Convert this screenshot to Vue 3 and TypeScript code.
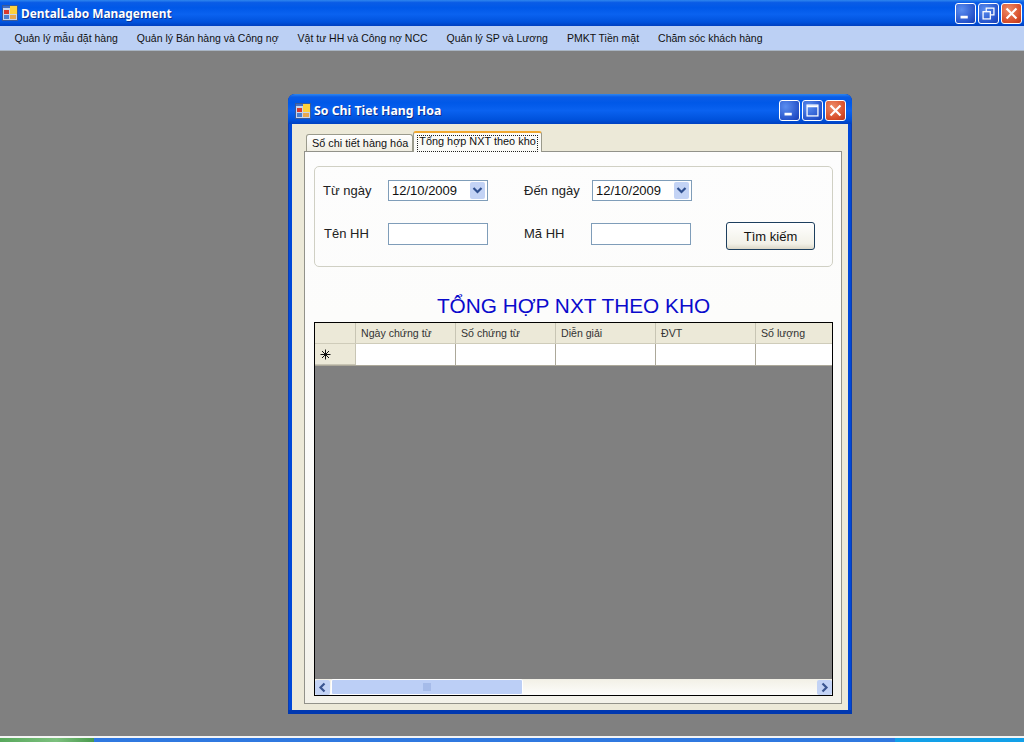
<script setup lang="ts">
const menus: string[] = [
  'Quản lý mẫu đặt hàng',
  'Quản lý Bán hàng và Công nợ',
  'Vật tư HH và Công nợ NCC',
  'Quản lý SP và Lương',
  'PMKT Tiền mặt',
  'Chăm sóc khách hàng',
]
const columns: string[] = ['Ngày chứng từ', 'Số chứng từ', 'Diễn giải', 'ĐVT', 'Số lượng']
</script>

<template>
  <div class="screen">
    <header class="titlebar main-title">
      <svg class="app-icon" viewBox="0 0 16 16" width="16" height="16">
        <rect x="0.5" y="0.5" width="15" height="15" fill="#c8d6ee" stroke="#3a5a98" />
        <rect x="1" y="1" width="7" height="2" fill="#3f6fc8" />
        <rect x="8" y="1" width="7" height="8" fill="#ffd23c" />
        <rect x="2" y="5" width="5" height="4" fill="#d83a2c" />
        <rect x="2" y="10" width="5" height="4" fill="#4a7fd0" />
        <rect x="8" y="10" width="6" height="4" fill="#e8a850" />
      </svg>
      <span class="main-name">DentalLabo Management</span>
      <div class="controls">
        <button class="ctl ctl-blue" aria-label="Minimize">
          <svg viewBox="0 0 21 21"><rect x="5" y="13" width="8" height="3" fill="#fff" /></svg>
        </button>
        <button class="ctl ctl-blue" aria-label="Restore">
          <svg viewBox="0 0 21 21" fill="none" stroke="#fff" stroke-width="1.4">
            <rect x="4.5" y="8.5" width="8" height="8" />
            <path d="M8 8V4.5h8.5V12H13" />
          </svg>
        </button>
        <button class="ctl ctl-red" aria-label="Close">
          <svg viewBox="0 0 21 21"><path d="M5 5l11 11M16 5L5 16" stroke="#fff" stroke-width="2.4" /></svg>
        </button>
      </div>
    </header>

    <nav class="menubar">
      <span v-for="m in menus" :key="m" class="menu-item">{{ m }}</span>
    </nav>

    <main class="desktop">
      <section class="dialog">
        <header class="titlebar dialog-title">
          <svg class="app-icon" viewBox="0 0 16 16" width="16" height="16">
            <rect x="0.5" y="0.5" width="15" height="15" fill="#c8d6ee" stroke="#3a5a98" />
            <rect x="1" y="1" width="7" height="2" fill="#3f6fc8" />
            <rect x="8" y="1" width="7" height="8" fill="#ffd23c" />
            <rect x="2" y="5" width="5" height="4" fill="#d83a2c" />
            <rect x="2" y="10" width="5" height="4" fill="#4a7fd0" />
            <rect x="8" y="10" width="6" height="4" fill="#e8a850" />
          </svg>
          <span class="dialog-name">So Chi Tiet Hang Hoa</span>
          <div class="controls">
            <button class="ctl ctl-blue" aria-label="Minimize">
              <svg viewBox="0 0 21 21"><rect x="5" y="13" width="8" height="3" fill="#fff" /></svg>
            </button>
            <button class="ctl ctl-blue" aria-label="Maximize">
              <svg viewBox="0 0 21 21" fill="none" stroke="#fff" stroke-width="1.4">
                <rect x="4.5" y="4.5" width="12" height="12" />
                <path d="M4.5 6h12" stroke-width="2" />
              </svg>
            </button>
            <button class="ctl ctl-red" aria-label="Close">
              <svg viewBox="0 0 21 21"><path d="M5 5l11 11M16 5L5 16" stroke="#fff" stroke-width="2.4" /></svg>
            </button>
          </div>
        </header>

        <div class="dialog-body">
          <div class="tabstrip">
            <div class="tab">Sổ chi tiết hàng hóa</div>
            <div class="tab tab-active"><span class="tab-focus">Tổng hợp NXT theo kho</span></div>
          </div>

          <div class="tabpage">
            <div class="group">
              <div class="form-row row-one">
                <label class="lbl lbl-a">Từ ngày</label>
                <div class="date-box">
                  <span>12/10/2009</span>
                  <span class="drop">
                    <svg viewBox="0 0 15 17" width="15" height="17"><path d="M3.5 6l4 4 4-4" fill="none" stroke="#2f4f8f" stroke-width="2.2" /></svg>
                  </span>
                </div>
                <label class="lbl lbl-b">Đến ngày</label>
                <div class="date-box">
                  <span>12/10/2009</span>
                  <span class="drop">
                    <svg viewBox="0 0 15 17" width="15" height="17"><path d="M3.5 6l4 4 4-4" fill="none" stroke="#2f4f8f" stroke-width="2.2" /></svg>
                  </span>
                </div>
              </div>
              <div class="form-row row-two">
                <label class="lbl lbl-a lbl-ten">Tên HH</label>
                <div class="text-box"></div>
                <label class="lbl lbl-c">Mã HH</label>
                <div class="text-box"></div>
                <button class="search">Tìm kiếm</button>
              </div>
            </div>

            <h1 class="report-title">TỔNG HỢP NXT THEO KHO</h1>

            <div class="grid">
              <div class="grid-row grid-head">
                <div class="row-head"></div>
                <div v-for="c in columns" :key="c" class="col-head">{{ c }}</div>
              </div>
              <div class="grid-row grid-new">
                <div class="row-head star">
                  <svg viewBox="0 0 11 11" width="11" height="11">
                    <path d="M5.5 0.5v10M0.5 5.5h10M2 2l7 7M9 2l-7 7" stroke="#111" stroke-width="1" fill="none" />
                  </svg>
                </div>
                <div v-for="c in columns" :key="c" class="cell"></div>
              </div>
              <div class="grid-empty"></div>
              <div class="hscroll">
                <span class="sbtn">
                  <svg viewBox="0 0 15 15" width="15" height="15"><path d="M9.5 3.5l-4 4 4 4" fill="none" stroke="#3a5590" stroke-width="2.2" /></svg>
                </span>
                <span class="thumb">
                  <svg viewBox="0 0 9 8" width="9" height="8"><path d="M1 0v8M3 0v8M5 0v8M7 0v8" stroke="#8fa8dc" /></svg>
                </span>
                <span class="track"></span>
                <span class="sbtn">
                  <svg viewBox="0 0 15 15" width="15" height="15"><path d="M5.5 3.5l4 4-4 4" fill="none" stroke="#3a5590" stroke-width="2.2" /></svg>
                </span>
              </div>
            </div>
          </div>
        </div>
      </section>
    </main>

    <footer class="taskbar">
      <span class="start"></span>
      <span class="task-mid"></span>
      <span class="tray"></span>
    </footer>
  </div>
</template>

<style>
html, body { margin: 0; padding: 0; }
</style>

<style scoped>
.screen {
  width: 1024px;
  height: 742px;
  display: flex;
  flex-direction: column;
  overflow: hidden;
  font-family: "Liberation Sans", sans-serif;
  color: #111;
}
.titlebar {
  display: flex;
  align-items: center;
  background: linear-gradient(180deg, #2f86ee 0, #0a5ce6 10%, #0058e8 30%, #0a62f0 55%, #0052dc 85%, #0040c0 100%);
  color: #fff;
  font-weight: 700;
  font-family: "Noto Sans", sans-serif;
}
.main-title {
  height: 26px;
  flex: none;
  padding: 0 2px 0 2px;
  box-sizing: border-box;
}
.main-name {
  margin-left: 3px;
  font-size: 11.9px;
  text-shadow: 1px 1px 0 #0a2f8f;
}
.controls {
  margin-left: auto;
  display: flex;
  gap: 2px;
}
.ctl {
  width: 21px;
  height: 21px;
  padding: 0;
  border: 1px solid #fff;
  border-radius: 3px;
  display: block;
}
.ctl svg { display: block; width: 100%; height: 100%; }
.ctl-blue { background: radial-gradient(circle at 30% 30%, #5b8ef0, #2350c8 75%, #1a3fae); }
.ctl-red { background: radial-gradient(circle at 35% 30%, #ee8c68, #d8502c 65%, #b8341a); }
.menubar {
  height: 24px;
  flex: none;
  background: #bcd0f4;
  display: flex;
  align-items: center;
  padding-left: 5px;
  font-size: 10.5px;
  border-bottom: 1px solid #a9b5c4;
}
.menu-item { padding: 0 9.5px; white-space: nowrap; }
.desktop {
  flex: 1;
  background: #808080;
  position: relative;
}
.dialog {
  position: absolute;
  left: 288px;
  top: 43px;
  width: 564px;
  height: 620px;
  box-sizing: border-box;
  display: flex;
  flex-direction: column;
  border-radius: 7px 7px 0 0;
  overflow: hidden;
  background: #0048d8;
  border-bottom: 4px solid #0038b0;
  box-shadow: inset 1px 0 0 #0a3cb0, inset -1px 0 0 #0a3cb0;
}
.dialog-title {
  height: 30px;
  flex: none;
  padding: 3px 6px 0 7px;
  box-sizing: border-box;
}
.dialog-name {
  margin-left: 3px;
  font-size: 12.3px;
  text-shadow: 1px 1px 0 #0a2f8f;
}
.dialog-body {
  flex: 1;
  margin: 0 4px;
  background: #ece9d8;
  padding: 7px 6px 6px 12px;
  display: flex;
  flex-direction: column;
  min-height: 0;
}
.tabstrip {
  display: flex;
  align-items: flex-end;
  height: 20px;
  padding-left: 2px;
  flex: none;
  font-size: 10.9px;
}
.tab {
  height: 16px;
  padding: 0 4px 0 5px;
  width: 96px;
  line-height: 17px;
  background: linear-gradient(180deg, #fff, #f0eee2);
  border: 1px solid #9a9a8c;
  border-bottom: none;
  border-radius: 3px 3px 0 0;
  white-space: nowrap;
}
.tab-active {
  height: 21px;
  width: 129px;
  box-sizing: border-box;
  padding: 2px 3px 0 3px;
  background: #fbfbf8;
  border-top: 2px solid #f0a830;
  margin-bottom: -1px;
  position: relative;
  z-index: 1;
}
.tab-focus {
  display: block;
  border: 1px dotted #222;
  height: 15px;
  line-height: 11px;
  text-align: center;
}
.tabpage {
  flex: 1;
  min-height: 0;
  background: linear-gradient(180deg, #fdfdfd 0, #fbfbf9 60%, #f3f2ea 100%);
  border: 1px solid #92928a;
  padding: 14px 8px 7px 9px;
  display: flex;
  flex-direction: column;
  box-sizing: border-box;
}
.group {
  height: 101px;
  flex: none;
  box-sizing: border-box;
  border: 1px solid #d0d0c4;
  border-radius: 5px;
  padding: 13px 0 0 8px;
  width: 519px;
}
.form-row {
  display: flex;
  align-items: center;
  font-size: 13px;
}
.row-one { height: 21px; }
.row-two { height: 28px; margin-top: 21px; align-items: flex-start; }
.lbl { display: block; white-space: nowrap; color: #222; }
.row-two .lbl { line-height: 22px; margin-top: 1px; }
.lbl-a { width: 65px; }
.lbl-b { width: 68px; margin-left: 36px; }
.lbl-c { width: 67px; margin-left: 36px; }
.lbl-ten { padding-left: 1px; width: 64px; }
.date-box {
  width: 100px;
  height: 21px;
  box-sizing: border-box;
  border: 1px solid #7f9db9;
  background: #fff;
  display: flex;
  align-items: center;
  justify-content: space-between;
  padding: 0 2px 0 3px;
}
.drop {
  width: 15px;
  height: 17px;
  background: #c3d3f5;
  border-radius: 2px;
  display: block;
}
.drop svg { display: block; }
.text-box {
  width: 100px;
  height: 22px;
  margin-top: 1px;
  box-sizing: border-box;
  border: 1px solid #7f9db9;
  background: #fff;
}
.search {
  width: 89px;
  height: 28px;
  margin-left: 35px;
  box-sizing: border-box;
  border: 1px solid #1d3f5e;
  border-radius: 3px;
  background: linear-gradient(180deg, #fff, #f2f1e8 80%, #dcd8c8);
  font-family: inherit;
  font-size: 13px;
  color: #111;
  padding: 0;
}
.report-title {
  margin: 27px 0 5px 0;
  height: 23px;
  line-height: 23px;
  flex: none;
  width: 519px;
  text-align: center;
  font-size: 20.8px;
  font-weight: 400;
  color: #0a0acc;
  white-space: nowrap;
}
.grid {
  width: 519px;
  flex: 1;
  min-height: 0;
  box-sizing: border-box;
  border: 1px solid #000;
  background: #808080;
  display: flex;
  flex-direction: column;
  font-size: 10.6px;
}
.grid-row { display: flex; flex: none; }
.grid-head { height: 21px; background: #ece9d8; border-bottom: 1px solid #cfccba; box-sizing: border-box; }
.grid-new { height: 22px; background: #fff; border-bottom: 1px solid #aca899; box-sizing: border-box; }
.row-head {
  width: 41px;
  flex: none;
  box-sizing: border-box;
  background: #ece9d8;
  border-right: 1px solid #c8c5b4;
}
.star {
  padding: 5px 0 0 5px;
  border-bottom: 1px solid #c8c5b4;
}
.star svg { display: block; }
.col-head {
  width: 100px;
  flex: none;
  box-sizing: border-box;
  padding: 3px 0 0 5px;
  line-height: 15px;
  color: #333;
  border-right: 1px solid #c8c5b4;
  white-space: nowrap;
}
.cell {
  width: 100px;
  flex: none;
  box-sizing: border-box;
  border-right: 1px solid #aca899;
}
.col-head:last-child, .cell:last-child { width: 76px; border-right: none; }
.grid-empty { flex: 1; min-height: 0; }
.hscroll {
  height: 16px;
  flex: none;
  display: flex;
  align-items: center;
  background: linear-gradient(180deg, #f2f0e6, #fdfdfb);
}
.sbtn {
  width: 15px;
  height: 15px;
  flex: none;
  background: #c3d3f5;
  border-radius: 2px;
  display: block;
}
.sbtn svg, .thumb svg { display: block; }
.thumb {
  width: 192px;
  height: 16px;
  margin-left: 1px;
  box-sizing: border-box;
  border: 1px solid #fff;
  background: #bccff6;
  border-radius: 2px;
  display: flex;
  align-items: center;
  justify-content: center;
}
.track { flex: 1; }
.taskbar {
  height: 6px;
  flex: none;
  display: flex;
  box-sizing: border-box;
  border-top: 2px solid #f4f4f4;
  background: #2f78e0;
}
.start { width: 94px; background: linear-gradient(90deg, #58a85c, #7cc07e 60%, #4a9a4e); }
.task-mid { flex: 1; }
.tray { width: 129px; background: #12a0e8; }
</style>
